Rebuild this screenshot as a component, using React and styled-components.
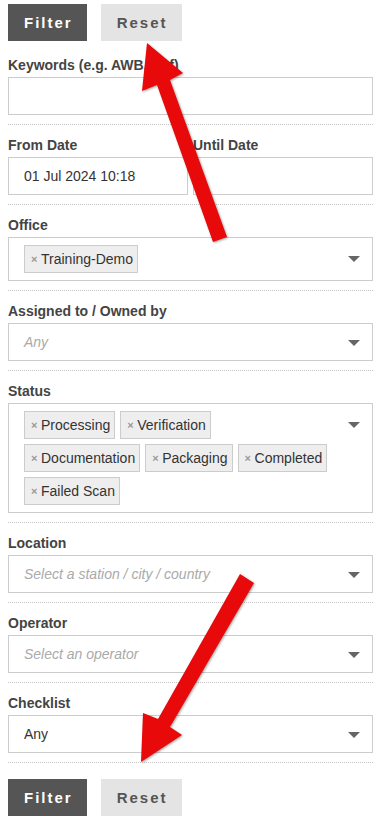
import styled, { createGlobalStyle } from 'styled-components';

const GlobalStyle = createGlobalStyle`
  body {
    margin: 0;
    background: #fff;
    font-family: "Liberation Sans", Arial, sans-serif;
    color: #333;
  }
`

const Page = styled.div`
  position: relative;
  width: 380px;
  box-sizing: border-box;
  padding: 4px 7px 10px 8px;
`

const ButtonRow = styled.div`
  display: flex;
  gap: 14px;
  margin-top: ${props => props.$top || 0}px;
`

const Button = styled.button`
  height: 37px;
  padding: 0 14px 0 16px;
  border: none;
  font-family: "Liberation Sans", Arial, sans-serif;
  font-weight: bold;
  font-size: 15px;
  letter-spacing: 2px;
  background: ${props => props.$primary ? '#555' : '#e4e4e4'};
  color: ${props => props.$primary ? '#fff' : '#555'};
`

const Group = styled.div`
  padding: ${props => props.$first ? 14 : 10}px 0 9px;
  border-bottom: 1px dotted #c4c4c4;
`

const Label = styled.div`
  font-size: 14px;
  font-weight: bold;
  line-height: 20px;
  color: #444;
  margin-bottom: 2px;
`

const TwoCols = styled.div`
  display: grid;
  grid-template-columns: 1fr 1fr;
  gap: 5px;
`

const TextInput = styled.div`
  height: 38px;
  box-sizing: border-box;
  border: 1px solid #ccc;
  padding: 0 15px;
  display: flex;
  align-items: center;
  font-size: 14px;
  color: #333;
`

const SelectBox = styled.div`
  min-height: 38px;
  box-sizing: border-box;
  border: 1px solid #ccc;
  display: flex;
  align-items: ${props => props.$multi ? 'flex-start' : 'center'};
  padding: ${props => props.$multi ? '7px 0 7px 15px' : '0 0 0 15px'};
`

const SelectValue = styled.div`
  flex: 1;
  display: flex;
  flex-wrap: wrap;
  gap: 5px;
  padding-right: ${props => props.$multi ? 20 : 0}px;
  font-size: 14px;
  font-style: ${props => props.$placeholder ? 'italic' : 'normal'};
  color: ${props => props.$placeholder ? '#aaa' : '#333'};
`

const Caret = styled.span`
  width: 0;
  height: 0;
  border-left: 6px solid transparent;
  border-right: 6px solid transparent;
  border-top: 6px solid #666;
  margin: ${props => props.$multi ? '11px 12px 0 0' : '2px 12px 0 0'};
`

const Tag = styled.span`
  display: inline-flex;
  align-items: center;
  height: 28px;
  box-sizing: border-box;
  padding: 0 4px 0 6px;
  border: 1px solid #ccc;
  background: #eee;
  font-size: 14px;
  color: #333;
`

const Remove = styled.span`
  width: 10px;
  font-size: 11px;
  font-weight: bold;
  color: #999;
`

const Arrows = styled.svg`
  position: absolute;
  top: 0;
  left: 0;
  pointer-events: none;
  filter: drop-shadow(1px 1px 1px rgba(0, 0, 0, 0.35));
`

const Select = ({ placeholder, value, tags }) => {
    const multi = !!tags
    return (
        <SelectBox $multi={multi}>
            <SelectValue $multi={multi} $placeholder={!!placeholder}>
                {multi ? tags.map(t => <Tag key={t}><Remove>×</Remove>{t}</Tag>) : (placeholder || value)}
            </SelectValue>
            <Caret $multi={multi}/>
        </SelectBox>
    )
}

const Buttons = ({ top }) => (
    <ButtonRow $top={top}>
        <Button $primary>Filter</Button>
        <Button>Reset</Button>
    </ButtonRow>
)

const statuses = ['Processing', 'Verification', 'Documentation', 'Packaging', 'Completed', 'Failed Scan']

const App = () => {
    return (
        <Page>
            <GlobalStyle/>
            <Buttons/>
            <Group $first>
                <Label>Keywords (e.g. AWB, Ref)</Label>
                <TextInput/>
            </Group>
            <Group>
                <TwoCols>
                    <div>
                        <Label>From Date</Label>
                        <TextInput>01 Jul 2024 10:18</TextInput>
                    </div>
                    <div>
                        <Label>Until Date</Label>
                        <TextInput/>
                    </div>
                </TwoCols>
            </Group>
            <Group>
                <Label>Office</Label>
                <Select tags={['Training-Demo']}/>
            </Group>
            <Group>
                <Label>Assigned to / Owned by</Label>
                <Select placeholder="Any"/>
            </Group>
            <Group>
                <Label>Status</Label>
                <Select tags={statuses}/>
            </Group>
            <Group>
                <Label>Location</Label>
                <Select placeholder="Select a station / city / country"/>
            </Group>
            <Group>
                <Label>Operator</Label>
                <Select placeholder="Select an operator"/>
            </Group>
            <Group>
                <Label>Checklist</Label>
                <Select value="Any"/>
            </Group>
            <Buttons top={16}/>
            <Arrows width="380" height="829" viewBox="0 0 380 829">
                <polygon fill="#e8090b" points="147,43 183,73 170,80 227,237 213,242 157,85 142,91"/>
                <polygon fill="#e8090b" points="240,574 254,583 170,727 182,735 141,762 143,713 158,719"/>
            </Arrows>
        </Page>
    )
}

export default App;
